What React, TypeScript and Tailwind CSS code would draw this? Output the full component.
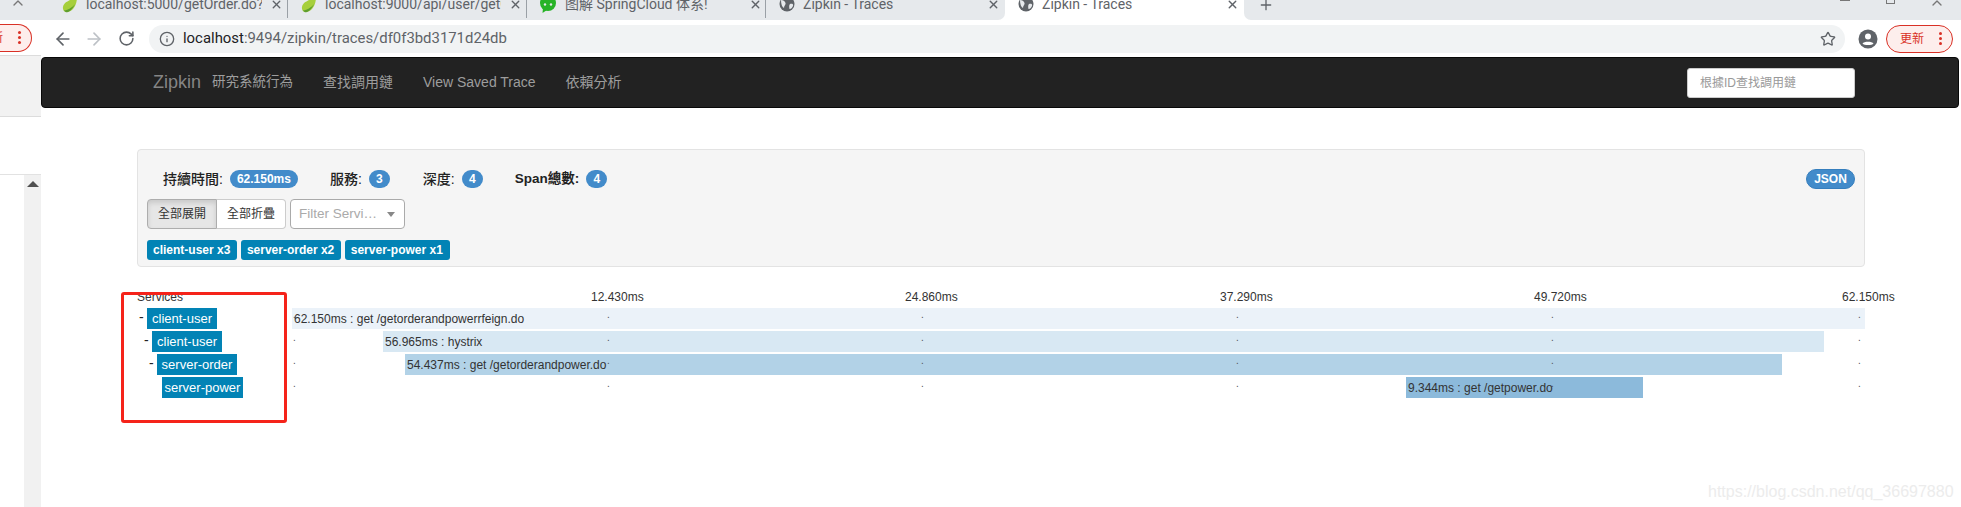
import React from 'react';
import { ArrowLeft, ArrowRight, RotateCw, Info, Star, X, Plus, ChevronUp } from 'lucide-react';

const tabs = [
  { title: 'localhost:5000/getOrder.do?name', icon: 'leaf' },
  { title: 'localhost:9000/api/user/getOrder', icon: 'leaf' },
  { title: '图解 SpringCloud 体系!', icon: 'wechat' },
  { title: 'Zipkin - Traces', icon: 'globe' },
];

const ticks = [
  { label: '12.430ms', textLeft: 299, dot: 315 },
  { label: '24.860ms', textLeft: 613, dot: 629 },
  { label: '37.290ms', textLeft: 928, dot: 944 },
  { label: '49.720ms', textLeft: 1242, dot: 1259 },
  { label: '62.150ms', textLeft: 1550, dot: 1566 },
];

const spans = [
  { indent: 10, dash: true, service: 'client-user', width: 70, left: 0, bar: 1573, text: '62.150ms : get /getorderandpowerrfeign.do', color: '#ebf2f9' },
  { indent: 15, dash: true, service: 'client-user', width: 70, left: 91, bar: 1441, text: '56.965ms : hystrix', color: '#d8e8f3' },
  { indent: 20, dash: true, service: 'server-order', width: 80, left: 113, bar: 1377, text: '54.437ms : get /getorderandpower.do', color: '#b2d2e7' },
  { indent: 25, dash: false, service: 'server-power', width: 81, left: 1114, bar: 237, text: '9.344ms : get /getpower.do', color: '#8cbadb' },
];

function Leaf() {
  return (
    <svg width="16" height="24" viewBox="0 0 16 24" className="shrink-0">
      <path d="M15 3C15.500 13 11 19.500 5 20C2 20.200 0.500 17.500 1 15C2 9 9 9 15 3Z" fill="#a6cf3c" />
      <path d="M1.500 18.500C5 18.500 10 16 13 12C11 17 7 20.500 4 20.300Z" fill="#5f9e2f" />
    </svg>
  );
}

function Wechat() {
  return (
    <svg width="17" height="24" viewBox="0 0 17 24" className="shrink-0">
      <ellipse cx="8" cy="11" rx="8" ry="8" fill="#27b327" />
      <path d="M3 16L2.500 21L7 18Z" fill="#27b327" />
      <circle cx="5" cy="12.500" r="1.200" fill="#e6e9ec" />
      <circle cx="11" cy="12.500" r="1.200" fill="#e6e9ec" />
    </svg>
  );
}

function Globe() {
  return (
    <svg width="16" height="24" viewBox="0 0 16 24" className="shrink-0">
      <circle cx="8" cy="12" r="7.500" fill="#5f6368" />
      <path d="M2 8C4 8 6 9 6.500 11C7 13 5 13.500 5 16C3 15 2 12 2 8ZM8 5C11 5 12 7 10 8C9 8.500 8 7 8 5ZM11 12C13 11.500 14.500 12 14 14C13 16 11.500 17.500 10.500 17C10 15 10 13 11 12Z" fill="#e6e9ec" />
    </svg>
  );
}

function Tab({ title, icon, active, sep }: { title: string; icon: string; active?: boolean; sep?: boolean }) {
  return (
    <div className={`w-[239px] h-[20px] shrink-0 overflow-hidden relative ${active ? 'bg-white' : ''}`}>
      <div className="flex items-center h-[34px] -mt-[13px] pl-[13px] pr-[8px] gap-[8px]">
        {icon === 'leaf' && <Leaf />}
        {icon === 'wechat' && <Wechat />}
        {icon === 'globe' && <Globe />}
        <div className="w-[176px] shrink-0 whitespace-nowrap overflow-hidden text-[14px] text-[#5f6368] font-['Roboto','Noto_Sans_CJK_SC',sans-serif]">
          {title}
        </div>
        <X className="w-[13px] h-[13px] ml-auto text-[#5f6368] shrink-0" strokeWidth={2.5} />
      </div>
      {sep && <div className="absolute right-0 top-0 w-px h-[18px] bg-[#9aa0a6]" />}
    </div>
  );
}

function Stat({ label, value, bold, className }: { label: string; value: string; bold?: boolean; className: string }) {
  return (
    <div className={`flex items-center gap-[7px] ${className}`}>
      <span className={`text-[#222] ${bold ? 'font-bold text-[13.5px]' : 'font-medium text-[14px]'}`}>{label}</span>
      <span className="h-[18px] min-w-[21px] px-[7px] rounded-full bg-[#428bca] text-white text-[12px] font-bold flex items-center justify-center">
        {value}
      </span>
    </div>
  );
}

function Dots() {
  return (
    <div className="flex flex-col gap-[2px] shrink-0">
      <span className="w-[3px] h-[3px] rounded-full bg-[#d93025]" />
      <span className="w-[3px] h-[3px] rounded-full bg-[#d93025]" />
      <span className="w-[3px] h-[3px] rounded-full bg-[#d93025]" />
    </div>
  );
}

export default function App() {
  return (
    <div className="w-[1961px] h-[507px] overflow-hidden relative bg-white font-['Liberation_Sans','Noto_Sans_CJK_TC',sans-serif] text-[#333]">
      {/* tab strip */}
      <div className="flex h-[20px] bg-white">
        <div className="w-[1005px] bg-[#e6e9ec] rounded-br-[7px] flex pl-[49px] relative">
          <ChevronUp className="absolute left-[10px] -top-[5px] w-[16px] h-[16px] text-[#777]" />
          {tabs.map((t, i) => (
            <Tab key={i} title={t.title} icon={t.icon} sep={i < 3} />
          ))}
        </div>
        <Tab title="Zipkin - Traces" icon="globe" active />
        <div className="flex-1 bg-[#e6e9ec] rounded-bl-[7px] flex items-start">
          <Plus className="w-[16px] h-[16px] ml-[14px] -mt-[3px] text-[#5f6368] shrink-0" />
          <div className="ml-[566px] w-[10px] h-px bg-[#777] shrink-0" />
          <div className="ml-[36px] w-[9px] h-[4px] border border-t-0 border-[#777] shrink-0" />
          <ChevronUp className="ml-[34px] -mt-[5px] w-[16px] h-[16px] text-[#777] shrink-0" />
        </div>
      </div>

      <div className="flex">
        {/* left window edge */}
        <div className="w-[41px] shrink-0 flex flex-col h-[487px]">
          <div className="h-[35px] flex items-center overflow-hidden">
            <div className="w-[32px] h-[28px] shrink-0 rounded-r-full border border-l-0 border-[#d93025] bg-[#fdeeec] flex items-center overflow-hidden">
              <span className="text-[12px] text-[#d93025] -ml-[9px] shrink-0">新</span>
              <div className="ml-[15px]">
                <Dots />
              </div>
            </div>
          </div>
          <div className="h-[62px] bg-[#f2f2f2] border-y border-[#dcdcdc]" />
          <div className="h-[58px] border-b border-[#e2e2e2]" />
          <div className="flex-1 ml-[24px] bg-[#f1f1f1] flex justify-center pt-[6px]">
            <div className="w-0 h-0 border-x-[6px] border-x-transparent border-b-[6px] border-b-[#505050]" />
          </div>
        </div>

        <div className="flex-1 min-w-0">
          {/* browser toolbar */}
          <div className="h-[37px] flex items-center">
            <ArrowLeft className="w-[20px] h-[20px] ml-[12px] text-[#5f6368]" strokeWidth={2} />
            <ArrowRight className="w-[20px] h-[20px] ml-[11px] text-[#bdc1c6]" strokeWidth={2} />
            <RotateCw className="w-[17px] h-[17px] ml-[14px] text-[#5f6368]" strokeWidth={2.2} />
            <div className="w-[1696px] h-[28px] ml-[14px] rounded-full bg-[#f1f3f4] flex items-center pl-[10px] pr-[9px]">
              <Info className="w-[16px] h-[16px] text-[#5f6368]" strokeWidth={2} />
              <div className="ml-[8px] text-[14.9px] font-['Roboto',sans-serif] text-[#5f6368]">
                <span className="text-[#202124]">localhost</span>:9494/zipkin/traces/df0f3bd3171d24db
              </div>
              <Star className="w-[16px] h-[16px] ml-auto text-[#5f6368]" strokeWidth={2} />
            </div>
            <svg width="20" height="20" viewBox="0 0 20 20" className="ml-[13px] shrink-0">
              <circle cx="10" cy="10" r="9.500" fill="#5f6368" />
              <circle cx="10" cy="7.500" r="3" fill="#fff" />
              <path d="M4.500 14.500C6 12 14 12 15.500 14.500C14 16.500 6 16.500 4.500 14.500Z" fill="#fff" />
            </svg>
            <div className="w-[67px] h-[28px] ml-[8px] shrink-0 rounded-full border border-[#d93025] bg-[#fdeeec] flex items-center pl-[13px]">
              <span className="text-[12px] text-[#d93025]">更新</span>
              <div className="ml-[15px]">
                <Dots />
              </div>
            </div>
          </div>

          {/* navbar */}
          <div className="w-[1918px] h-[51px] bg-[#222] border border-[#080808] rounded-[4px] flex items-center pl-[111px]">
            <span className="text-[18px] text-[#858585]">Zipkin</span>
            <span className="ml-[11px] text-[13.5px] text-[#9d9d9d]">研究系統行為</span>
            <span className="ml-[30px] text-[14px] text-[#9d9d9d]">查找調用鏈</span>
            <span className="ml-[30px] text-[14px] text-[#9d9d9d]">View Saved Trace</span>
            <span className="ml-[30px] text-[14px] text-[#9d9d9d]">依賴分析</span>
            <input
              readOnly
              placeholder="根據ID查找調用鏈"
              className="w-[168px] h-[30px] ml-auto mr-[103px] bg-white rounded-[3px] border border-[#ccc] px-[12px] text-[12px] placeholder:text-[#999] outline-none"
            />
          </div>

          {/* trace summary */}
          <div className="w-[1728px] ml-[96px] mt-[41px] h-[118px] bg-[#f5f5f5] border border-[#e3e3e3] rounded-[4px] pt-[19px] px-[9px]">
            <div className="flex items-center h-[20px]">
              <Stat label="持續時間:" value="62.150ms" className="ml-[16px]" />
              <Stat label="服務:" value="3" className="ml-[32px]" />
              <Stat label="深度:" value="4" className="ml-[33px]" />
              <Stat label="Span總數:" value="4" bold className="ml-[32px]" />
              <span className="ml-auto w-[49px] h-[20px] rounded-full bg-[#428bca] border border-[#357ebd] text-white text-[12px] font-bold flex items-center justify-center">
                JSON
              </span>
            </div>
            <div className="flex mt-[10px]">
              <div className="w-[70px] h-[30px] bg-[#e6e6e6] border border-[#adadad] rounded-l-[4px] text-[12px] flex items-center justify-center shadow-[inset_0_3px_5px_rgba(0,0,0,0.125)]">
                全部展開
              </div>
              <div className="w-[69px] h-[30px] bg-white border border-l-0 border-[#ccc] rounded-r-[4px] text-[12px] flex items-center justify-center">
                全部折疊
              </div>
              <div className="w-[115px] h-[30px] ml-[4px] bg-white border border-[#aaa] rounded-[4px] flex items-center pl-[8px] text-[13.5px] text-[#aaa]">
                Filter Servi…
                <div className="ml-[10px] w-0 h-0 border-x-[4px] border-x-transparent border-t-[5px] border-t-[#888]" />
              </div>
            </div>
            <div className="flex gap-[3.5px] mt-[11px]">
              {['client-user x3', 'server-order x2', 'server-power x1'].map(s => (
                <span key={s} className="h-[20px] pl-[6px] pr-[7px] rounded-[3px] bg-[#0283b5] text-white text-[12px] font-bold flex items-center">
                  {s}
                </span>
              ))}
            </div>
          </div>

          {/* timeline */}
          <div className="ml-[96px] mt-[23px] text-[12px]">
            <div className="flex h-[18px]">
              <div className="w-[155px] shrink-0 leading-[14px]">Services</div>
              <div className="relative flex-1">
                {ticks.map(t => (
                  <span key={t.label} className="absolute top-0 leading-[14px]" style={{ left: t.textLeft }}>
                    {t.label}
                  </span>
                ))}
              </div>
            </div>
            {spans.map((s, i) => (
              <div key={i} className="flex h-[21px] mb-[2px]">
                <div className="w-[155px] shrink-0 relative" style={{ paddingLeft: s.indent }}>
                  {s.dash && (
                    <span className="absolute text-[14px] leading-[19px] text-[#222]" style={{ left: s.indent - 8 }}>
                      -
                    </span>
                  )}
                  <div
                    className="h-[21px] bg-[#0283b5] text-white flex items-center justify-center text-[13px]"
                    style={{ width: s.width }}
                  >
                    {s.service}
                  </div>
                </div>
                <div className="relative w-[1573px]">
                  <div
                    className="h-[21px] flex items-center pl-[2px] whitespace-nowrap"
                    style={{ marginLeft: s.left, width: s.bar, backgroundColor: s.color }}
                  >
                    {s.text}
                  </div>
                  {[1, ...ticks.map(t => t.dot)].map(x => (
                    <span key={x} className="absolute -top-px text-[#555] text-[10px]" style={{ left: x }}>
                      .
                    </span>
                  ))}
                </div>
              </div>
            ))}
          </div>
        </div>
      </div>

      {/* red annotation box */}
      <div className="absolute left-[121px] top-[292px] w-[166px] h-[131px] border-[3px] border-[#f5231a] rounded-[3px]" />
      {/* watermark */}
      <div className="absolute left-[1708px] top-[480px] text-[16px] text-[#ececec] whitespace-nowrap">
        https://blog.csdn.net/qq_36697880
      </div>
    </div>
  );
}
